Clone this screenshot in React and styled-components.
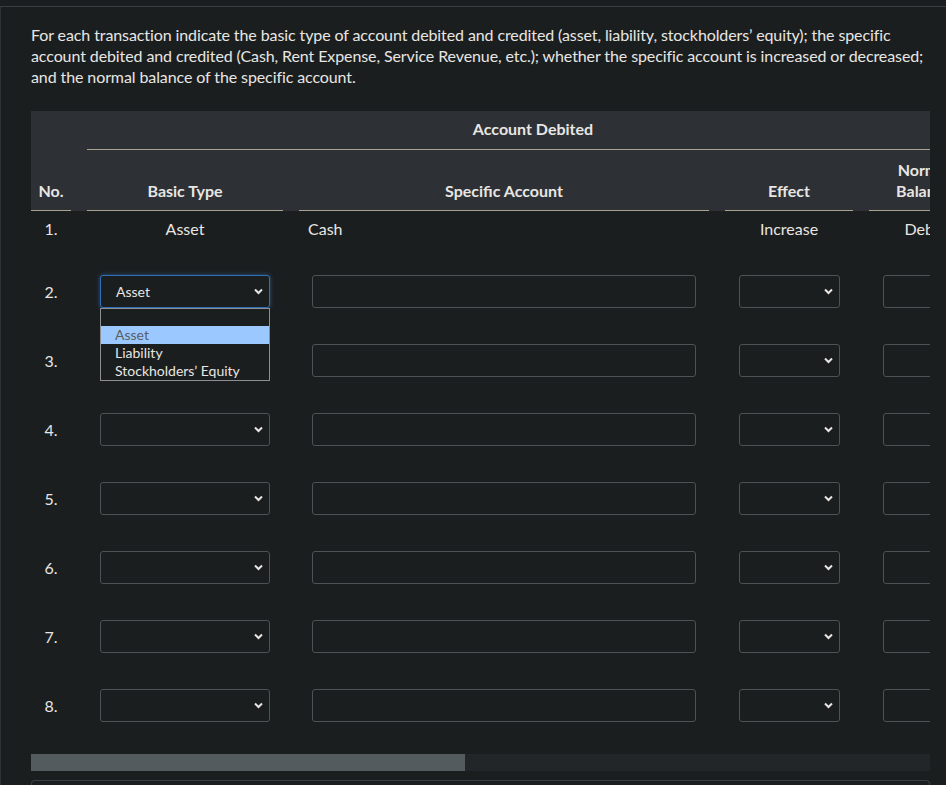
import React from "react";
import styled, { createGlobalStyle } from "styled-components";

const GlobalStyle = createGlobalStyle`
  html, body {
    margin: 0;
    padding: 0;
    background-color: #1b1e1f;
  }
  body {
    font-family: Lato, "Open Sans", "Liberation Sans", sans-serif;
    color: #e8e6e3;
  }
`;

const Page = styled.div`
  margin-top: 6px;
  border-top: 1px solid #3a3e41;
  border-left: 1px solid #2f3336;
  padding: 17px 16px 0 30px;
  min-height: 778px;
  box-sizing: border-box;
`;

const Intro = styled.p`
  margin: 0 0 24px 0;
  font-size: 16px;
  line-height: 21px;
  letter-spacing: -0.1px;
`;

const Scroller = styled.div`
  overflow: hidden;
  width: 899px;
`;

const Columns = styled.div`
  display: grid;
  grid-template-columns: 40px 196px 410px 128px 110px;
  column-gap: 16px;
  width: 948px;
`;

const HeaderBlock = styled(Columns)`
  background-color: #2d3034;
`;

const HeadCell = styled.div`
  grid-column: ${(p) => p.span || "auto"};
  font-weight: 700;
  font-size: 16px;
  line-height: 21px;
  text-align: center;
  padding: ${(p) => (p.top ? "7px 0 10px" : "9px 0 9px")};
  border-bottom: ${(p) => (p.noLine ? "1px solid transparent" : "1px solid #a9a291")};
  display: flex;
  flex-direction: column;
  justify-content: flex-end;
  align-items: center;
`;

const BodyCell = styled.div`
  font-size: 16px;
  line-height: 21px;
  text-align: ${(p) => p.align || "center"};
  padding: ${(p) => (p.first ? "7px 0 18px" : "18px 0")};
  padding-left: ${(p) => p.padLeft || "0"};
  display: flex;
  align-items: center;
  justify-content: ${(p) => (p.align === "left" ? "flex-start" : "center")};
`;

const FieldWrap = styled.div`
  position: relative;
  width: 100%;
  margin: 0 ${(p) => p.right || 13}px 0 ${(p) => p.left || 13}px;
  height: 33px;
`;

const Select = styled.div`
  box-sizing: border-box;
  width: 100%;
  height: 33px;
  border: 1px solid ${(p) => (p.focused ? "#2f6fb8" : "#4d5255")};
  box-shadow: ${(p) => (p.focused ? "0 0 4px rgba(60, 130, 210, 0.55)" : "none")};
  border-radius: 3px;
  background-color: #1b1e1f;
  font-size: 14px;
  line-height: 31px;
  padding-left: 15px;
  text-align: left;
  color: #e8e6e3;
`;

const Chevron = styled.svg`
  position: absolute;
  right: 7px;
  top: 13px;
  width: 9px;
  height: 7px;
`;

const TextInput = styled.div`
  box-sizing: border-box;
  width: 100%;
  height: 33px;
  border: 1px solid #4d5255;
  border-radius: 3px;
  background-color: #1b1e1f;
`;

const ListBox = styled.div`
  position: absolute;
  top: 33px;
  left: 0;
  width: 100%;
  box-sizing: border-box;
  border: 1px solid #8d8f91;
  background-color: #1b1e1f;
  font-size: 14px;
  text-align: left;
  z-index: 2;
`;

const Option = styled.div`
  height: ${(p) => (p.blank ? "17px" : "18px")};
  line-height: 18px;
  padding-left: 14px;
  background-color: ${(p) => (p.active ? "#9bc9ff" : "transparent")};
  color: ${(p) => (p.active ? "#5a5f63" : "#e8e6e3")};
  white-space: nowrap;
`;

const ScrollTrack = styled.div`
  margin-top: 14px;
  width: 899px;
  height: 17px;
  background-color: #232628;
`;

const ScrollThumb = styled.div`
  height: 100%;
  background-color: #545b5e;
`;

const NextBox = styled.div`
  margin-top: 9px;
  width: 897px;
  height: 20px;
  border: 1px solid #3a3e41;
  border-bottom: none;
  border-radius: 4px 4px 0 0;
`;

const ChevronIcon = () => (
  <Chevron viewBox="0 0 9 7">
    <polyline points="1,1.5 4.5,5 8,1.5" fill="none" stroke="#e8e6e3" strokeWidth="2" />
  </Chevron>
);

const Dropdown = ({ value, focused, open, left, right }) => (
  <FieldWrap left={left} right={right}>
    <Select focused={focused}>{value}</Select>
    <ChevronIcon />
    {open && (
      <ListBox>
        <Option blank />
        <Option active>Asset</Option>
        <Option>Liability</Option>
        <Option>Stockholders’ Equity</Option>
      </ListBox>
    )}
  </FieldWrap>
);

const rows = [2, 3, 4, 5, 6, 7, 8];

export default function App() {
  return (
    <>
      <GlobalStyle />
      <Page>
        <Intro>
          For each transaction indicate the basic type of account debited and credited (asset,
          liability, stockholders’ equity); the specific account debited and credited (Cash, Rent
          Expense, Service Revenue, etc.); whether the specific account is increased or decreased;
          and the normal balance of the specific account.
        </Intro>
        <Scroller>
          <HeaderBlock>
            <HeadCell top noLine />
            <HeadCell top span="2 / 6">
              Account Debited
            </HeadCell>
            <HeadCell>No.</HeadCell>
            <HeadCell>Basic Type</HeadCell>
            <HeadCell>Specific Account</HeadCell>
            <HeadCell>Effect</HeadCell>
            <HeadCell>
              <span>Normal</span>
              <span>Balance</span>
            </HeadCell>
          </HeaderBlock>
          <Columns>
            <BodyCell first>1.</BodyCell>
            <BodyCell first>Asset</BodyCell>
            <BodyCell first align="left" padLeft="9px">
              Cash
            </BodyCell>
            <BodyCell first>Increase</BodyCell>
            <BodyCell first>Debit</BodyCell>
            {rows.map((n) => (
              <React.Fragment key={n}>
                <BodyCell>{n}.</BodyCell>
                <BodyCell>
                  {n === 2 ? <Dropdown value="Asset" focused open /> : <Dropdown value="" />}
                </BodyCell>
                <BodyCell>
                  <FieldWrap>
                    <TextInput />
                  </FieldWrap>
                </BodyCell>
                <BodyCell>
                  <Dropdown value="" left={14} right={13} />
                </BodyCell>
                <BodyCell>
                  <FieldWrap left={14}>
                    <TextInput />
                  </FieldWrap>
                </BodyCell>
              </React.Fragment>
            ))}
          </Columns>
        </Scroller>
        <ScrollTrack>
          <ScrollThumb style={{ width: `${(434 / 899) * 100}%` }} />
        </ScrollTrack>
        <NextBox />
      </Page>
    </>
  );
}
